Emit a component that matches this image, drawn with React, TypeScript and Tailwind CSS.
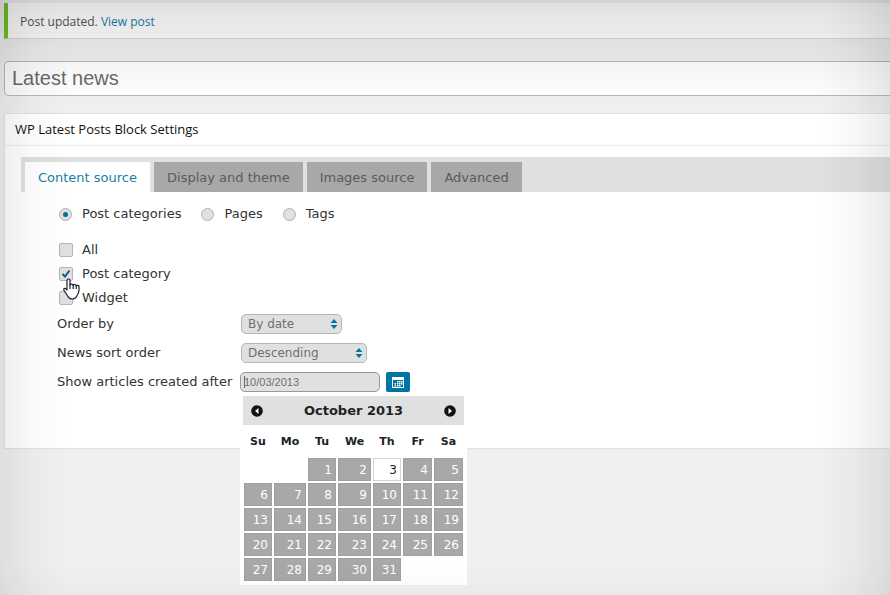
import { useState } from "react";

const TABS = ["Content source", "Display and theme", "Images source", "Advanced"];
const SOURCES = ["Post categories", "Pages", "Tags"];
const CATEGORIES = ["All", "Post category", "Widget"];

const DAYS = [
  { name: "Su", width: "w-[30px]" },
  { name: "Mo", width: "w-[34px]" },
  { name: "Tu", width: "w-[30px]" },
  { name: "We", width: "w-[35px]" },
  { name: "Th", width: "w-[30px]" },
  { name: "Fr", width: "w-[31px]" },
  { name: "Sa", width: "w-[31px]" },
];

// October 2013 starts on a Tuesday
const WEEKS = [0, 1, 2, 3, 4].map((w) =>
  DAYS.map((_, d) => {
    const day = w * 7 + d - 1;
    return day >= 1 && day <= 31 ? day : null;
  })
);

function Select({
  id,
  options,
  className,
}: {
  id: string;
  options: string[];
  className: string;
}) {
  return (
    <div className={`relative ml-px ${className}`}>
      <select
        id={id}
        className="block h-5 w-full appearance-none rounded-[5px] border border-[#b5b5b5] bg-[#e0e0e0] pl-1.5 text-xs leading-4 text-[#6f6f6f]"
      >
        {options.map((o) => (
          <option key={o}>{o}</option>
        ))}
      </select>
      <svg
        viewBox="0 0 8 10"
        className="pointer-events-none absolute top-[5px] right-1 h-[10px] w-2 fill-[#0074a2]"
      >
        <path d="M4 0 L7.5 4 H.5 Z M4 10 L7.5 6 H.5 Z" />
      </svg>
    </div>
  );
}

function Arrow({ flip }: { flip?: boolean }) {
  return (
    <svg viewBox="0 0 12 12" className={`size-3 ${flip ? "rotate-180" : ""}`}>
      <circle cx="6" cy="6" r="5.8" fill="#111" />
      <path d="M7.5 3 V9 L4 6 Z" fill="#fff" />
    </svg>
  );
}

function DatePicker({
  day,
  onSelect,
}: {
  day: number;
  onSelect: (day: number) => void;
}) {
  return (
    <div className="absolute top-full left-0 z-10 mt-1 w-[227px] bg-white px-[3px] pb-[3px]">
      <div className="flex h-[29px] items-center justify-between bg-[#e0e0e0] px-2">
        <button type="button" aria-label="Prev">
          <Arrow />
        </button>
        <span className="text-[13px] font-bold text-[#222]">October 2013</span>
        <button type="button" aria-label="Next">
          <Arrow flip />
        </button>
      </div>
      <table className="w-full table-fixed border-collapse">
        <thead>
          <tr className="h-8">
            {DAYS.map((d) => (
              <th
                key={d.name}
                className={`p-0 pt-0.5 text-center text-[11px] font-bold text-[#222] ${d.width}`}
              >
                {d.name}
              </th>
            ))}
          </tr>
        </thead>
        <tbody>
          {WEEKS.map((week, i) => (
            <tr key={i}>
              {week.map((d, j) => (
                <td key={j} className="p-px">
                  {d && (
                    <button
                      type="button"
                      onClick={() => onSelect(d)}
                      className={`block h-[23px] w-full border pr-[3px] text-right text-xs ${
                        d === day
                          ? "border-[#d3d3d3] bg-white text-[#222]"
                          : "border-[#a0a0a0] bg-[#a8a8a8] text-white"
                      }`}
                    >
                      {d}
                    </button>
                  )}
                </td>
              ))}
            </tr>
          ))}
        </tbody>
      </table>
    </div>
  );
}

function Pointer() {
  return (
    <svg
      viewBox="0 0 17 22"
      className="pointer-events-none absolute top-4 left-1 z-10 h-[22px] w-[17px]"
    >
      <path
        d="M5.5 1 C4.6 1 4 1.6 4 2.5 V12 L2.9 10.8 C2.2 10 1 10.2 .8 11 C.6 11.5 .8 12 1.1 12.5 L5 18.5 C6.5 21.8 12 21.8 13.5 18.5 C15 16.5 16 14.5 16 12 V8.5 C16 7.4 14.2 7 13.3 7.8 C13 6.6 11 6.2 10.2 7.2 C9.8 6.1 7.8 5.8 7 6.6 V2.5 C7 1.6 6.4 1 5.5 1 Z"
        fill="#fff"
        stroke="#1b1b2b"
        strokeWidth="1.2"
        strokeLinejoin="round"
      />
      <path
        d="M7 6 V11 M10.2 7 V11 M13.3 8 V11"
        fill="none"
        stroke="#1b1b2b"
        strokeWidth="1.2"
      />
    </svg>
  );
}

export default function App() {
  const [tab, setTab] = useState(TABS[0]);
  const [source, setSource] = useState(SOURCES[0]);
  const [checked, setChecked] = useState(["Post category"]);
  const [title, setTitle] = useState("Latest news");
  const [date, setDate] = useState("10/03/2013");

  const toggle = (name: string) =>
    setChecked(
      checked.includes(name)
        ? checked.filter((c) => c !== name)
        : [...checked, name]
    );

  return (
    <div className="min-h-screen bg-[#f0f0f0] pt-[3px] pl-1 font-['DejaVu_Sans',Verdana,sans-serif] text-[13px] text-[#333]">
      <div className="flex h-9 items-center border-b border-l-4 border-b-[#dcdcdc] border-l-[#70c624] bg-white pt-0.5 pl-3 font-['Open_Sans',sans-serif] text-xs text-[#555]">
        <p>
          Post updated.{" "}
          <a href="#post" className="text-[#1a7fa8]">
            View post
          </a>
        </p>
      </div>

      <input
        aria-label="Title"
        value={title}
        onChange={(e) => setTitle(e.target.value)}
        className="mt-[22px] block h-[35px] w-full rounded-l-[5px] border border-r-0 border-[#b9b9b9] bg-white px-[7px] font-['Liberation_Sans',sans-serif] text-xl text-[#6b6b6b]"
      />

      <section className="mt-[17px] h-[336px] border border-r-0 border-[#e2e2e2] bg-white">
        <h2 className="flex h-8 items-center border-b border-[#eee] pt-px pl-2.5 font-['Open_Sans',sans-serif] text-[13px] font-medium text-[#111]">
          WP Latest Posts Block Settings
        </h2>

        <div className="mt-[11px] ml-4 flex h-[35px] items-end gap-1 bg-[#e0e0e0] pl-1">
          {TABS.map((t) => (
            <button
              key={t}
              type="button"
              onClick={() => setTab(t)}
              className={`h-[30px] px-[13px] pt-0.5 text-[13px] ${
                t === tab ? "bg-white text-[#1a7fa8]" : "bg-[#a8a8a8] text-[#5b5b5b]"
              }`}
            >
              {t}
            </button>
          ))}
        </div>

        <div className="pl-[52px]">
          <div className="mt-3 flex h-5 items-center gap-5 pl-0.5">
            {SOURCES.map((s) => (
              <label key={s} className="flex items-center gap-2.5">
                <input
                  type="radio"
                  name="source"
                  checked={source === s}
                  onChange={() => setSource(s)}
                  className="grid size-[13px] appearance-none place-items-center rounded-full border border-[#b0b0b0] bg-[#e0e0e0] before:size-[5px] before:rounded-full checked:before:bg-[#0074a2]"
                />
                {s}
              </label>
            ))}
          </div>

          <div className="mt-3.5 pl-0.5">
            {CATEGORIES.map((c) => (
              <div key={c} className="relative flex h-6 items-center">
                <label className="flex items-center gap-[9px]">
                  <span className="relative block size-[14px]">
                    <input
                      type="checkbox"
                      checked={checked.includes(c)}
                      onChange={() => toggle(c)}
                      className="block size-full appearance-none rounded-[2px] border border-[#b5b5b5] bg-[#e0e0e0]"
                    />
                    {checked.includes(c) && (
                      <svg
                        viewBox="0 0 14 14"
                        className="pointer-events-none absolute inset-0"
                      >
                        <path
                          d="M3.5 7 L6 9.5 L10.5 3.5"
                          fill="none"
                          stroke="#005f8a"
                          strokeWidth="2"
                        />
                      </svg>
                    )}
                  </span>
                  {c}
                </label>
                {c === "Post category" && <Pointer />}
              </div>
            ))}
          </div>

          <div className="mt-1 grid grid-cols-[183px_1fr] items-center gap-y-[9px]">
            <label htmlFor="order">Order by</label>
            <Select id="order" options={["By date", "By title"]} className="w-[101px]" />
            <label htmlFor="sort">News sort order</label>
            <Select
              id="sort"
              options={["Descending", "Ascending"]}
              className="w-[126px]"
            />
            <label htmlFor="after">Show articles created after</label>
            <div className="relative flex gap-1.5">
              <input
                id="after"
                value={date}
                onChange={(e) => setDate(e.target.value)}
                className="h-5 w-[140px] rounded-[5px] border border-[#999] bg-[#e0e0e0] px-[3px] font-['Liberation_Sans',sans-serif] text-[11px] text-[#6f6f6f]"
              />
              <span className="absolute top-1 left-1 h-3 w-px bg-[#666]" />
              <button
                type="button"
                aria-label="Open calendar"
                className="grid h-5 w-6 place-items-center rounded-[2px] bg-[#0074a2]"
              >
                <svg viewBox="0 0 12 11" className="h-[11px] w-3">
                  <path
                    d="M0 0 H12 V11 H0 Z M1 3 V10 H11 V3 Z"
                    fill="#fff"
                    fillRule="evenodd"
                  />
                  <path
                    d="M5 4h1.5v1.5H5z M7 4h1.5v1.5H7z M9 4h1.5v1.5H9z M2.5 6h1.5v1.5H2.5z M5 6h1.5v1.5H5z M7 6h1.5v1.5H7z M9 6h1.5v1.5H9z M2.5 8h1.5v1.5H2.5z M5 8h1.5v1.5H5z M7 8h1.5v1.5H7z"
                    fill="#fff"
                  />
                </svg>
              </button>
              <DatePicker
                day={parseInt(date.slice(3, 5))}
                onSelect={(d) => setDate(`10/${String(d).padStart(2, "0")}/2013`)}
              />
            </div>
          </div>
        </div>
      </section>

      {/* soft shade towards the window edges */}
      <div className="pointer-events-none fixed inset-0 z-20">
        <div className="absolute inset-x-0 top-0 h-[105px] bg-linear-to-b from-black/12 via-black/5 to-transparent" />
        <div className="absolute inset-x-0 bottom-0 h-8 bg-linear-to-t from-black/2 to-transparent" />
        <div className="absolute inset-y-0 left-0 w-[70px] bg-linear-to-r from-black/7 via-black/2 to-transparent" />
        <div className="absolute inset-y-0 right-0 w-[70px] bg-linear-to-l from-black/8 via-black/3 to-transparent" />
      </div>
    </div>
  );
}
